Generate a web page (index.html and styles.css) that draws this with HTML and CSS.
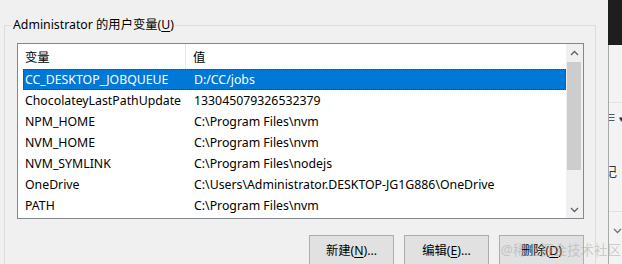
FILE: index.html
```html
<!DOCTYPE html>
<html lang="zh-CN">
<head>
  <meta charset="UTF-8" />
  <title>环境变量</title>
  <link rel="stylesheet" href="styles.css">
</head>
<body>
  <div class="screen">
    <div class="dialog">
      <fieldset class="group">
        <legend>Administrator 的用户变量(<u>U</u>)</legend>

        <!-- list view with header and rows -->
        <div class="listview">
          <div class="list-body">
            <div class="list-head">
              <div class="head-name">变量</div>
              <div class="head-value">值</div>
            </div>
            <div class="row selected"><span class="name">CC_DESKTOP_JOBQUEUE</span><span class="value">D:/CC/jobs</span></div>
            <div class="row"><span class="name">ChocolateyLastPathUpdate</span><span class="value">133045079326532379</span></div>
            <div class="row"><span class="name">NPM_HOME</span><span class="value">C:\Program Files\nvm</span></div>
            <div class="row"><span class="name">NVM_HOME</span><span class="value">C:\Program Files\nvm</span></div>
            <div class="row"><span class="name">NVM_SYMLINK</span><span class="value">C:\Program Files\nodejs</span></div>
            <div class="row"><span class="name">OneDrive</span><span class="value">C:\Users\Administrator.DESKTOP-JG1G886\OneDrive</span></div>
            <div class="row"><span class="name">PATH</span><span class="value">C:\Program Files\nvm</span></div>
          </div>
          <div class="scrollbar">
            <div class="arrow">
              <svg width="9" height="6" viewBox="0 0 9 6"><polyline points="1,5 4.5,1.5 8,5" fill="none" stroke="#606060" stroke-width="1.3"/></svg>
            </div>
            <div class="thumb"></div>
            <div class="track"></div>
            <div class="arrow">
              <svg width="9" height="6" viewBox="0 0 9 6"><polyline points="1,1 4.5,4.5 8,1" fill="none" stroke="#606060" stroke-width="1.3"/></svg>
            </div>
          </div>
        </div>

        <div class="buttons">
          <button class="btn">新建(<u>N</u>)...</button>
          <button class="btn">编辑(<u>E</u>)...</button>
          <button class="btn">删除(<u>D</u>)</button>
        </div>
      </fieldset>
    </div>

    <!-- edge of the window behind the dialog -->
    <aside class="behind">
      <div class="behind-top"></div>
      <div class="behind-panel">
        <div class="behind-line"></div>
        <div class="behind-menu">≡ <span class="caret">▾</span></div>
        <div class="behind-text">记</div>
        <div class="behind-line"></div>
        <div class="behind-chevron">
          <svg width="9" height="6" viewBox="0 0 9 6"><polyline points="1,1 4.5,4.5 8,1" fill="none" stroke="#707070" stroke-width="1.3"/></svg>
        </div>
      </div>
    </aside>

    <div class="watermark">@稀土掘金技术社区</div>
  </div>
</body>
</html>
```

FILE: styles.css
```css
html, body {
  margin: 0;
  padding: 0;
}
body {
  font-family: "Noto Sans", "Noto Sans CJK SC", sans-serif;
  font-size: 12.3px;
  color: #000;
  background: #f0f0f0;
}
.screen {
  position: relative;
  display: flex;
  width: 622px;
  height: 264px;
  overflow: hidden;
}
.dialog {
  width: 608px;
  flex: none;
  padding-top: 17px;
  box-sizing: border-box;
}
fieldset.group {
  margin: 0 0 0 4px;
  width: 592px;
  box-sizing: border-box;
  padding: 10px 11px 0 12px;
  border: 1px solid #dcdcdc;
  min-width: 0;
}
fieldset.group legend {
  margin-left: -5px;
  padding: 0 1px;
  line-height: 16px;
}
u {
  text-decoration: underline;
  text-underline-offset: 2px;
}

/* list view */
.listview {
  display: flex;
  width: 567px;
  height: 176px;
  box-sizing: border-box;
  border: 1px solid #828790;
  background: #fff;
}
.list-body {
  flex: 1;
  min-width: 0;
}
.list-head {
  display: flex;
  height: 25px;
  align-items: center;
}
.head-name {
  width: 168px;
  height: 100%;
  padding-left: 7px;
  box-sizing: border-box;
  border-right: 1px solid #e5e5e5;
  display: flex;
  align-items: center;
}
.head-value {
  padding-left: 7px;
}
.row {
  display: flex;
  align-items: center;
  height: 21px;
  margin-left: 5px;
  padding-left: 2px;
  white-space: nowrap;
  box-sizing: border-box;
}
.row .name {
  width: 169px;
  flex: none;
}
.row.selected {
  background: #0078d7;
  color: #fff;
  outline: 1px dotted #27476a;
  outline-offset: -1px;
}

/* scrollbar */
.scrollbar {
  width: 17px;
  flex: none;
  display: flex;
  flex-direction: column;
  background: #f0f0f0;
}
.arrow {
  height: 17px;
  display: flex;
  align-items: center;
  justify-content: center;
}
.thumb {
  height: 108px;
  margin: 1px 2px 0 1px;
  background: #cdcdcd;
}
.track {
  flex: 1;
}

/* buttons */
.buttons {
  display: flex;
  justify-content: flex-end;
  gap: 10px;
  margin-top: 16px;
  width: 567px;
}
.btn {
  width: 85px;
  height: 30px;
  font: inherit;
  color: #000;
  background: #e1e1e1;
  border: 1px solid #adadad;
  padding: 0;
}

/* window behind */
.behind {
  flex: 1;
  display: flex;
  flex-direction: column;
}
.behind-top {
  height: 45px;
  background: #1e1e1e;
}
.behind-panel {
  flex: 1;
  background: #f3f3f3;
  border-left: 1px solid #a9a9a9;
  overflow: hidden;
  color: #333;
}
.behind-line {
  height: 1px;
  background: #e3e3e3;
  margin-top: 57px;
}
.behind-menu {
  margin: 7px 0 0 -4px;
  white-space: nowrap;
  font-size: 11px;
  line-height: 16px;
}
.behind-menu .caret {
  font-size: 9px;
}
.behind-text {
  margin: 36px 0 0 -5px;
  font-size: 13px;
  line-height: 16px;
}
.behind-text + .behind-line {
  margin-top: 32px;
}
.behind-chevron {
  margin: 15px 0 0 4px;
  line-height: 6px;
}

.watermark {
  position: absolute;
  right: 1px;
  bottom: 5px;
  font-size: 13.5px;
  color: rgba(170, 170, 170, 0.55);
  white-space: nowrap;
}
```
